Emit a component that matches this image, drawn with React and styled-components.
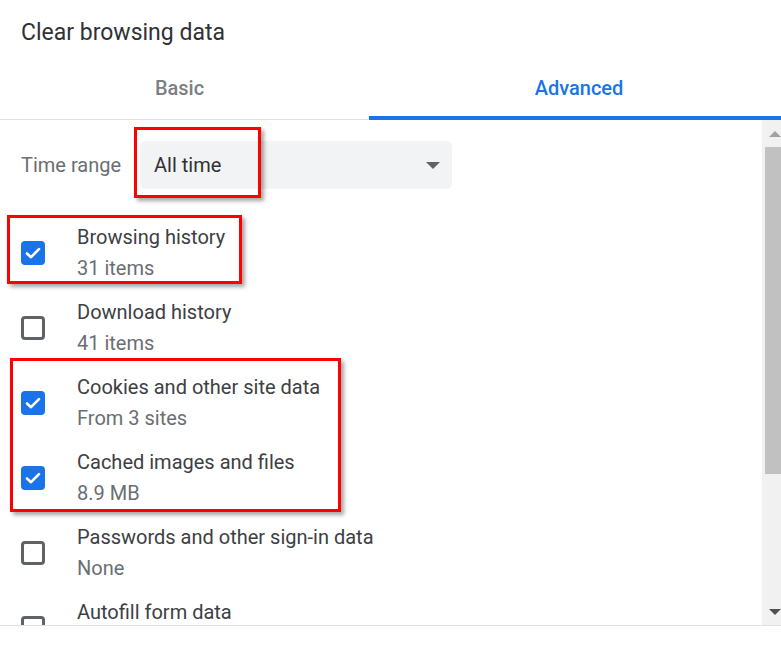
import React from "react";
import styled, { createGlobalStyle } from "styled-components";

const GlobalStyle = createGlobalStyle`
  html, body {
    margin: 0;
    padding: 0;
    background: #ffffff;
  }
  body {
    font-family: Roboto, "Liberation Sans", Arial, sans-serif;
  }
`;

const Dialog = styled.div`
  position: relative;
  width: 781px;
  height: 658px;
  display: flex;
  flex-direction: column;
  background: #ffffff;
  overflow: hidden;
`;

const Title = styled.div`
  height: 60px;
  box-sizing: border-box;
  padding: 18px 0 0 21px;
  font-size: 23px;
  line-height: 30px;
  color: #303134;
`;

const TabBar = styled.div`
  display: flex;
  border-bottom: 1px solid #e0e0e0;
`;

const Tab = styled.div`
  position: relative;
  height: 59px;
  box-sizing: border-box;
  display: flex;
  align-items: center;
  justify-content: center;
  padding: ${({ $active }) => ($active ? "0 0 3px 8px" : "0 10px 3px 0")};
  width: ${({ $active }) => ($active ? "auto" : "369px")};
  flex: ${({ $active }) => ($active ? "1" : "none")};
  font-size: 20px;
  font-weight: 500;
  color: ${({ $active }) => ($active ? "#1a73e8" : "#7b7f84")};

  &::after {
    content: "";
    display: ${({ $active }) => ($active ? "block" : "none")};
    position: absolute;
    left: 0;
    right: 0;
    bottom: -1px;
    height: 4px;
    background: #1a73e8;
  }
`;

const Body = styled.div`
  height: 505px;
  display: flex;
`;

const Content = styled.div`
  flex: 1;
  overflow: hidden;
  padding: 21px 0 0 21px;
`;

const TimeRow = styled.div`
  display: flex;
  align-items: center;
  gap: 19px;
  height: 48px;
  margin-bottom: 26px;
`;

const FieldLabel = styled.span`
  font-size: 20px;
  color: #6a6e73;
`;

const Select = styled.div`
  width: 312px;
  height: 48px;
  box-sizing: border-box;
  display: flex;
  align-items: center;
  justify-content: space-between;
  padding: 0 12px 0 14px;
  background: #f1f3f4;
  border-radius: 6px;
  font-size: 20px;
  color: #303134;
`;

const Caret = styled.span`
  width: 0;
  height: 0;
  border-left: 7px solid transparent;
  border-right: 7px solid transparent;
  border-top: 7px solid #5f6368;
`;

const Row = styled.div`
  height: 75px;
  display: flex;
  align-items: center;
  gap: 32px;
`;

const Box = styled.div`
  flex: none;
  width: 24px;
  height: 24px;
  box-sizing: border-box;
  border-radius: 4px;
  display: flex;
  align-items: center;
  justify-content: center;
  background: ${({ $checked }) => ($checked ? "#1a73e8" : "transparent")};
  border: ${({ $checked }) => ($checked ? "none" : "3px solid #5f6368")};
`;

const Texts = styled.div`
  display: flex;
  flex-direction: column;
  font-size: 20px;
  line-height: 31px;
`;

const Label = styled.span`
  color: #3c4043;
`;

const Sub = styled.span`
  color: #6a6e73;
`;

const Scrollbar = styled.div`
  width: 19px;
  display: flex;
  flex-direction: column;
  background: #f1f1f1;
`;

const ArrowButton = styled.div`
  height: 27px;
  display: flex;
  align-items: center;
  justify-content: center;
  padding-left: 6px;
`;

const Arrow = styled.span`
  width: 0;
  height: 0;
  border-left: 6px solid transparent;
  border-right: 6px solid transparent;
  ${({ $down }) =>
    $down ? "border-top: 6px solid #505050;" : "border-bottom: 6px solid #a3a3a3;"}
`;

const Track = styled.div`
  flex: 1;
  display: flex;
  flex-direction: column;
  padding-left: 3px;
`;

const Thumb = styled.div`
  height: 327px;
  background: #c1c1c1;
`;

const Footer = styled.div`
  flex: 1;
  border-top: 1px solid #e0e0e0;
  background: #ffffff;
`;

const Highlight = styled.div`
  position: absolute;
  box-sizing: border-box;
  border: 3px solid #ff0000;
  box-shadow: 3px 3px 4px rgba(0, 0, 0, 0.35);
  pointer-events: none;
`;

const Check = () => (
  <svg width="20" height="20" viewBox="0 0 20 20">
    <polyline
      points="4,10.5 8,14.2 16,6.2"
      fill="none"
      stroke="#ffffff"
      strokeWidth="2.6"
      strokeLinecap="round"
      strokeLinejoin="round"
    />
  </svg>
);

const items = [
  { label: "Browsing history", sub: "31 items", checked: true },
  { label: "Download history", sub: "41 items", checked: false },
  { label: "Cookies and other site data", sub: "From 3 sites", checked: true },
  { label: "Cached images and files", sub: "8.9 MB", checked: true },
  { label: "Passwords and other sign-in data", sub: "None", checked: false },
  { label: "Autofill form data", sub: "", checked: false },
];

const boxes = [
  { left: 134, top: 127, width: 127, height: 71 },
  { left: 7, top: 215, width: 235, height: 69 },
  { left: 10, top: 358, width: 331, height: 154 },
];

export default function App() {
  return (
    <>
      <GlobalStyle />
      <Dialog>
        <Title>Clear browsing data</Title>
        <TabBar>
          <Tab>Basic</Tab>
          <Tab $active>Advanced</Tab>
        </TabBar>
        <Body>
          <Content>
            <TimeRow>
              <FieldLabel>Time range</FieldLabel>
              <Select>
                <span>All time</span>
                <Caret />
              </Select>
            </TimeRow>
            {items.map((item) => (
              <Row key={item.label}>
                <Box $checked={item.checked}>{item.checked && <Check />}</Box>
                <Texts>
                  <Label>{item.label}</Label>
                  <Sub>{item.sub || "\u00a0"}</Sub>
                </Texts>
              </Row>
            ))}
          </Content>
          <Scrollbar>
            <ArrowButton>
              <Arrow />
            </ArrowButton>
            <Track>
              <Thumb />
            </Track>
            <ArrowButton>
              <Arrow $down />
            </ArrowButton>
          </Scrollbar>
        </Body>
        <Footer />
        {boxes.map((b, i) => (
          <Highlight key={i} style={b} />
        ))}
      </Dialog>
    </>
  );
}
